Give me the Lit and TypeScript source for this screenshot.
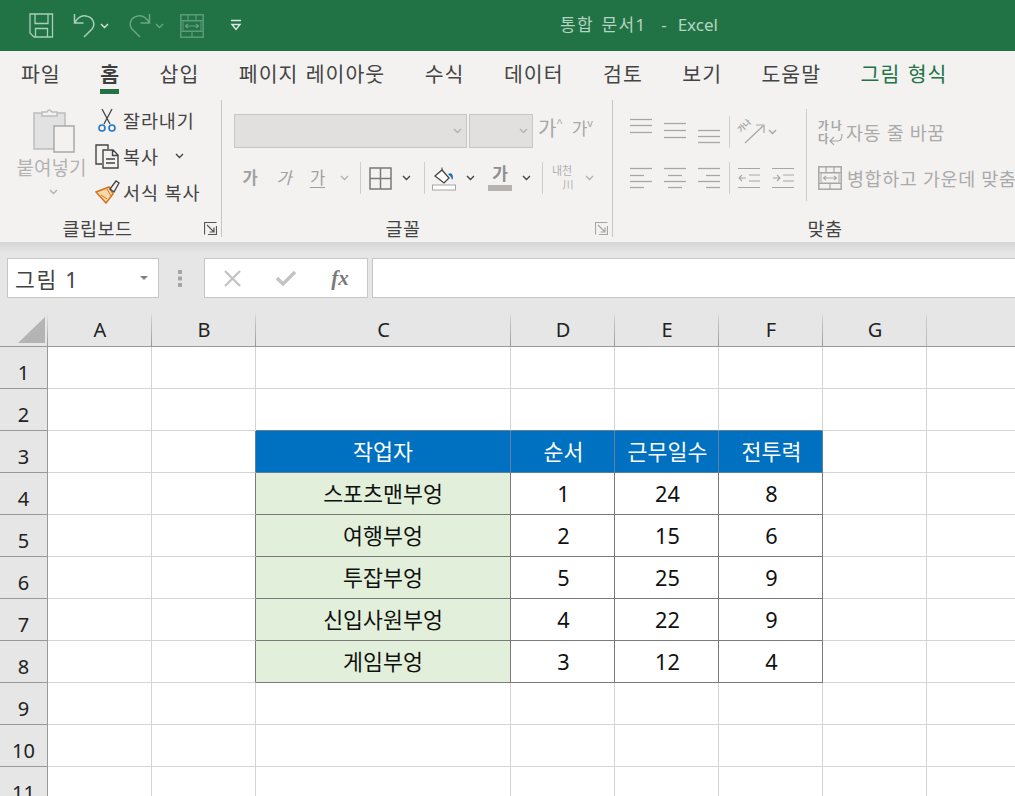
import { LitElement, html, svg, css } from "lit";
import { customElement } from "lit/decorators.js";

const chev = (c = "#444") => html`<svg class="ic" width="9" height="6" viewBox="0 0 9 6"><path d="M1 1l3.5 3.5L8 1" fill="none" stroke=${c} stroke-width="1.4"/></svg>`;
const launcher = (c: string) => html`<svg class="ic" width="13" height="13" viewBox="0 0 13 13"><path d="M.5 12.5V.5h12M12.5 4v8.5H4M3 3l7 7M10 5.5V10H5.5" fill="none" stroke=${c} stroke-width="1.2"/></svg>`;
const lines = (ys: number[], xs: number[][]) => html`<svg class="ic" width="24" height="36" viewBox="0 0 24 36">${ys.map((y, i) => svg`<path d="M${xs[i][0]} ${y}.5H${xs[i][1]}" stroke="#a6a6a6" stroke-width="1.3"/>`)}</svg>`;
const F = [1, 23];
const indent = (arrow: string) => html`<svg class="ic" width="24" height="36" viewBox="0 0 24 36"><path d="M1 8.5h22M1 27.5h22M12 15h11M12 21h11" stroke="#a6a6a6" stroke-width="1.2" fill="none"/><path d=${arrow === "l" ? "M9 18H2M5 15l-3 3 3 3" : "M2 18h7M6 15l3 3-3 3"} stroke="#a6a6a6" stroke-width="1.1" fill="none"/></svg>`;
const mergeIcon = (c: string, a: string) => html`<svg class="ic" width="24" height="24" viewBox="0 0 24 24"><rect x=".8" y=".8" width="22.4" height="22.4" fill="none" stroke=${c} stroke-width="1.5"/><path d="M1 6.5h22M1 17.5h22M8 1v5.5M16 1v5.5M12 17.5V23" stroke=${c} stroke-width="1.2"/><rect x="3" y="7" width="18" height="10" fill="none" stroke=${c}/><path d="M5.5 12h13M8 9.8L5.5 12 8 14.2M16 9.8l2.5 2.2-2.5 2.2" fill="none" stroke=${a} stroke-width="1.1"/></svg>`;

const COLS = ["A", "B", "C", "D", "E", "F", "G", ""];
const TABLE: string[][] = [
  ["작업자", "순서", "근무일수", "전투력"],
  ["스포츠맨부엉", "1", "24", "8"],
  ["여행부엉", "2", "15", "6"],
  ["투잡부엉", "5", "25", "9"],
  ["신입사원부엉", "4", "22", "9"],
  ["게임부엉", "3", "12", "4"],
];
const TABS = ["파일", "홈", "삽입", "페이지 레이아웃", "수식", "데이터", "검토", "보기", "도움말", "그림 형식"];

@customElement("app-root")
export class AppRoot extends LitElement {
  static styles = css`
    :host { display: block; width: 1015px; height: 796px; overflow: hidden; background: #fff;
      font-family: "Noto Sans", "Noto Sans CJK KR", sans-serif; color: #444; }
    .ic { display: block; flex: none; }
    .title { height: 51px; background: #217346; display: flex; align-items: center; position: relative; }
    .qat { display: flex; align-items: center; padding-left: 29px; }
    .qat .q1 { margin-left: 19px; } .qat .q2 { margin-left: 4px; } .qat .q3 { margin-left: 19px; }
    .qat .q4 { margin-left: 4px; } .qat .q5 { margin-left: 16px; } .qat .q6 { margin-left: 26px; }
    .doc { position: absolute; left: 560px; top: 13px; font-size: 17px; line-height: 24px; color: #b5d4c1; white-space: pre; }
    .doc span { letter-spacing: 1.3px; word-spacing: 2px; }
    .doc em { font-style: normal; margin-left: 4px; word-spacing: 1px; }
    .tabs { height: 44px; background: #f3f2f1; display: flex; padding-left: 21px; gap: 39.5px; box-sizing: border-box; }
    .tab { font-size: 20.5px; height: 44px; line-height: 46px; letter-spacing: 1px; word-spacing: 1px; white-space: nowrap; position: relative; color: #444; }
    .tab.on { font-weight: 700; color: #3f3f3f; }
    .tab.on::after { content: ""; position: absolute; left: 0; right: 1px; bottom: 1px; height: 5px; background: #217346; }
    .tab.pic { color: #217346; }
    .ribbon { height: 147px; background: #f3f2f1; display: flex; overflow: hidden; }
    .group { margin: 5px 0; height: 137px; display: grid; grid-template-rows: 116px 21px; border-right: 1px solid #c8c6c4; flex: none; box-sizing: border-box; }
    .g1 { width: 222px; } .g2 { width: 391px; } .g3 { flex: 1; border-right: 0; min-width: 0; }
    .glabel { font-size: 18.5px; line-height: 21px; letter-spacing: .5px; color: #444; display: grid; grid-template-columns: 1fr auto 1fr; align-items: center; transform: translateY(2px); }
    .glabel span { grid-column: 2; }
    .glabel .ic { grid-column: 3; justify-self: end; margin-right: 4px; }
    .g1 .glabel span { margin-right: 26px; } .g2 .glabel span { margin-right: 28px; }
    .g3 .glabel span { margin-left: 22px; }
    .clip { display: flex; padding: 2px 0 0 15px; }
    .paste { width: 73px; display: flex; flex-direction: column; align-items: center; }
    .paste .ic:first-child { margin: 5px 0 0 4px; }
    .paste .t { font-size: 19px; line-height: 24px; color: #b2b2b2; margin-top: 3px; white-space: nowrap; }
    .paste .pch { margin-top: 4px; }
    .cmds { margin-left: 7px; }
    .cmd { height: 36px; display: flex; align-items: center; font-size: 18.5px; letter-spacing: .9px; white-space: nowrap; }
    .cmd .slot { width: 28px; display: flex; }
    .cmd .cut { margin-left: 2px; }
    .cmd .chv { margin-left: 16px; }
    .font { padding: 14px 0 0 12px; }
    .fr1 { display: flex; height: 34px; }
    .sel { height: 34px; background: #e1e0df; border: 1px solid #c8c6c4; box-sizing: border-box; display: flex; align-items: center; justify-content: flex-end; padding-right: 4px; }
    .s1 { width: 233px; } .s2 { width: 64px; margin-left: 2px; }
    .grow { color: #a6a6a6; display: flex; margin-left: 5px; font-size: 20px; line-height: 30px; }
    .grow span.up { font-size: 11px; line-height: 18px; }
    .grow.sm { font-size: 17px; margin-left: 9px; }
    .fr2 { display: grid; grid-template-columns: 34px 34px 33px 20px 12px 28px 24px 12px 28px 24px 36px 16px 16px 24px 30px; height: 36px; margin: 12px 0 0 -1px; align-items: center; justify-items: center; }
    .sep { width: 1px; height: 32px; background: #d0cecc; }
    .fmt { font-size: 16.5px; color: #a0a0a0; line-height: 36px; }
    .fmt.b { font-weight: 700; } .fmt.i { font-style: italic; }
    .fmt.u { text-decoration: underline; text-underline-offset: 3px; }
    .fc { font-size: 17px; font-weight: 700; color: #8f8f8f; line-height: 18px; display: flex; flex-direction: column; align-items: center; }
    .fc i { display: block; width: 24px; height: 6px; background: #b5b2af; margin-top: 2px; }
    .ph { font-size: 11px; line-height: 14px; color: #b0b0b0; text-align: center; white-space: nowrap; }
    .ph b { display: block; font-weight: 400; padding-left: 12px; }
    .align { display: grid; padding: 14px 0 0 11px; grid-template-columns: 34px 34px 34px 6px 34px 34px 12px 1fr; grid-template-rows: 36px 36px; row-gap: 10px; justify-items: center; align-items: center; overflow: hidden; }
    .orient { grid-column: span 2; display: flex; align-items: center; justify-self: start; padding-left: 5px; gap: 3px; }
    .orient svg { overflow: visible; }
    .orient text { font-size: 8px; fill: #a6a6a6; stroke: none; font-weight: 700; }
    .bsep { grid-row: 1 / span 2; grid-column: 7; width: 1px; height: 92px; background: #d0cecc; }
    .wrap { justify-self: stretch; display: flex; align-items: center; font-size: 18.5px; color: #aaa; white-space: nowrap; letter-spacing: .6px; gap: 3px; padding-left: 6px; min-width: 0; }
    .wrap.m { gap: 5px; grid-column: 8; }
    .wrap.w { grid-column: 8; grid-row: 1; }
    .wicon { width: 25px; height: 26px; flex: none; display: grid; grid-template-columns: 13px 12px; grid-template-rows: 13px 13px; font-size: 11.5px; line-height: 13px; letter-spacing: 0; font-weight: 700; color: #a6a6a6; }
    .wicon svg { grid-column: 1 / span 2; grid-row: 2; justify-self: end; }
    .wicon .k3 { grid-column: 1; grid-row: 2; }
    .fbar { background: #e6e6e6; }
    .shadow { height: 16px; background: linear-gradient(#d6d6d6, #e6e6e6 70%); }
    .frow { display: flex; height: 40px; padding-left: 7px; }
    .box { background: #fff; border: 1px solid #c8c6c4; box-sizing: border-box; height: 40px; }
    .name { width: 152px; display: flex; align-items: center; justify-content: space-between; padding: 0 10px 0 7px; font-size: 21.5px; letter-spacing: 1.7px; color: #444; }
    .name i { width: 0; height: 0; border: 4px solid transparent; border-top: 4px solid #808080; border-bottom: 0; }
    .dots { width: 45px; display: flex; align-items: center; padding-left: 19px; box-sizing: border-box; }
    .fxb { width: 164px; display: grid; grid-template-columns: 54px 54px 54px; justify-items: center; align-items: center; }
    .fx { font-family: "Liberation Serif", serif; font-style: italic; font-weight: 700; font-size: 21px; color: #7a7a7a; line-height: 36px; }
    .input { flex: 1; margin-left: 4px; border-right: 0; }
    .sheet { display: grid; grid-template-columns: 48px 104px 104px 255px 104px 104px 104px 104px 1fr; grid-template-rows: 49px; grid-auto-rows: 42px; }
    .corner, .chd, .rh { background: #e6e6e6; box-sizing: border-box; color: #222; }
    .corner { height: 49px; display: flex; align-items: flex-end; justify-content: flex-end; padding: 0 3px 3px 0; border-bottom: 1px solid #999; background-image: linear-gradient(#e6e6e6 15px, #999); background-size: 1px 100%; background-repeat: no-repeat; background-position: right; }
    .chd { height: 49px; font-size: 20px; line-height: 22px; padding-top: 21px; text-align: center; border-bottom: 1px solid #999; background-image: linear-gradient(#e6e6e6 15px, #ccc 20px, #999); background-size: 1px 100%; background-repeat: no-repeat; background-position: right; }
    .chd.last { background-image: none; }
    .chd.g { background-image: linear-gradient(#e6e6e6 15px, #ccc 20px, #bbb); }
    .rh { height: 42px; border-right: 1px solid #999; border-bottom: 1px solid #999; text-align: center; font-size: 20px; line-height: 24px; padding-top: 14px; }
    .c { box-sizing: border-box; height: 42px; border-right: 1px solid #d4d4d4; border-bottom: 1px solid #d4d4d4; font-size: 21.7px; line-height: 42px; text-align: center; color: #111; white-space: nowrap; }
    .c.last { border-right: 0; }
    .c.num { padding-left: 2px; }
    .c.br { border-right-color: #7a7a7a; } .c.bb { border-bottom-color: #7a7a7a; }
    .c.hb { border-bottom-color: #5f7f9f; } .c.hr { border-right-color: #5f7f9f; }
    .c.head { background: #0070c0; color: #fff; }
    .c.label { background: #e2efda; }
  `;

  cell(col: number, row: number) {
    const inCols = col >= 2 && col <= 5;
    const inRows = row >= 3 && row <= 8;
    const text = inCols && inRows ? TABLE[row - 3][col - 2] : "";
    const cls = ["c"];
    if (col === 7) cls.push("last");
    if (inRows && inCols) cls.push("br", "bb");
    if (inRows && col >= 3 && col <= 5) cls.push("num");
    if (inRows && col === 1) cls.push("br");
    if (row === 2 && inCols) cls.push("hb");
    if (row === 3 && inCols) cls.push("hr", "hb");
    if (row === 3 && col === 1) cls.push("hr");
    if (row === 3 && inCols) cls.push("head");
    else if (inRows && col === 2) cls.push("label");
    return html`<div class=${cls.join(" ")}>${text}</div>`;
  }

  render() {
    const G = "#a8d0b8";
    const D = "#6aa585";
    return html`
      <div class="title">
        <div class="qat">
          <svg class="ic" width="25" height="25" viewBox="0 0 25 25" fill="none" stroke=${G} stroke-width="1.3"><path d="M1 1h22.5v23H5l-4-4zM6 1v9.5h13V1M6.5 24v-8.5h12V24"/></svg>
          <svg class="ic q1" width="23" height="25" viewBox="0 0 23 25" fill="none" stroke=${G} stroke-width="1.5"><path d="M1.5 1v9h9M1.5 10C5 4 9 2 13 3c7 1 10 8 6 13l-8 8"/></svg>
          <span class="q2">${chev("#d8e8de")}</span>
          <svg class="ic q3" width="23" height="25" viewBox="0 0 23 25" fill="none" stroke=${D} stroke-width="1.5"><path d="M21.5 1v9h-9M21.5 10C18 4 14 2 10 3 3 4 0 11 4 16l8 8"/></svg>
          <span class="q4">${chev("#6aa585")}</span>
          <span class="q5">${mergeIcon("#5c9c7a", "#6aa585")}</span>
          <svg class="ic q6" width="12" height="13" viewBox="0 0 12 13" fill="none" stroke="#d8e8de" stroke-width="1.4"><path d="M1 1.5h10M2 5.5l4 5 4-5z"/></svg>
        </div>
        <div class="doc"><span>통합 문서1</span><em>  -  Excel</em></div>
      </div>
      <div class="tabs">
        ${TABS.map((t, i) => html`<div class="tab ${i === 1 ? "on" : ""} ${i === 9 ? "pic" : ""}">${t}</div>`)}
      </div>
      <div class="ribbon">
        <div class="group g1">
          <div class="clip">
            <div class="paste">
              <svg class="ic" width="42" height="46" viewBox="0 0 42 46"><path d="M1 6h31v36H1z" fill="#e2e2e2" stroke="#bdbdbd" stroke-width="1.5"/><path d="M9 9V5h5q2-4 5 0h5v4z" fill="#f3f2f1" stroke="#bdbdbd" stroke-width="1.5"/><path d="M21 19h20v26H21z" fill="#f3f2f1" stroke="#a9a9a9" stroke-width="1.5"/></svg>
              <div class="t">붙여넣기</div>
              <span class="pch">${chev("#b2b2b2")}</span>
            </div>
            <div class="cmds">
              <div class="cmd"><span class="slot"><svg class="ic cut" width="20" height="25" viewBox="0 0 20 25" fill="none"><path d="M5 1l8 15M15 1L7 16" stroke="#444" stroke-width="1.3"/><circle cx="5" cy="20" r="3" stroke="#1e78c8" stroke-width="1.6"/><circle cx="15" cy="20" r="3" stroke="#1e78c8" stroke-width="1.6"/></svg></span>잘라내기</div>
              <div class="cmd"><span class="slot"><svg class="ic" width="25" height="25" viewBox="0 0 25 25" fill="none" stroke="#444" stroke-width="1.4"><path d="M7 20H1V1h12v4"/><path d="M8 6h10l5 5v13H8zM17.5 6v5.5H23M11 15h9M11 19h9"/></svg></span>복사<span class="chv">${chev()}</span></div>
              <div class="cmd"><span class="slot"><svg class="ic" width="25" height="24" viewBox="0 0 25 24" fill="none"><path d="M1 12L14 7l4 7-7 9z" fill="#f6d9a8" stroke="#d9701e" stroke-width="1.5"/><path d="M6 15l6 4M12 9l4 7" stroke="#d9701e"/><path d="M15 9l6-8 3 2-5 9z" fill="#f3f2f1" stroke="#444" stroke-width="1.3"/></svg></span>서식 복사</div>
            </div>
          </div>
          <div class="glabel"><span>클립보드</span>${launcher("#555")}</div>
        </div>
        <div class="group g2">
          <div class="font">
            <div class="fr1">
              <div class="sel s1">${chev("#b2b2b2")}</div>
              <div class="sel s2">${chev("#b2b2b2")}</div>
              <div class="grow">가<span class="up">^</span></div>
              <div class="grow sm">가<span class="up">v</span></div>
            </div>
            <div class="fr2">
              <div class="fmt b">가</div><div class="fmt i">가</div><div class="fmt u">가</div>${chev("#b2b2b2")}
              <div class="sep"></div>
              <svg class="ic" width="23" height="23" viewBox="0 0 23 23" fill="none" stroke="#7a7a7a" stroke-width="1.5"><path d="M1 1h21v21H1zM11.5 1v21M1 11.5h21"/></svg>
              ${chev()}
              <div class="sep"></div>
              <svg class="ic" width="24" height="25" viewBox="0 0 24 25" fill="none"><path d="M3 10l7-6 7 8-5 5z" fill="#fff" stroke="#444" stroke-width="1.3"/><path d="M10 4V1.5" stroke="#444"/><path d="M16 8c3-2 5 0 5 4l-1 2-1-3z" fill="#1d6fb8"/><rect x=".5" y="19" width="23" height="5" fill="#fff" stroke="#a6a6a6"/></svg>
              ${chev()}
              <div class="fc">가<i></i></div>
              ${chev()}
              <div class="sep"></div>
              <div class="ph">내천<b>川</b></div>
              ${chev("#b2b2b2")}
            </div>
          </div>
          <div class="glabel"><span>글꼴</span>${launcher("#a6a6a6")}</div>
        </div>
        <div class="group g3">
          <div class="align">
            ${lines([5, 11, 18], [F, F, F])}${lines([9, 16, 23], [F, F, F])}${lines([16, 22, 28], [F, F, F])}
            <div class="sep"></div>
            <div class="orient">
              <svg class="ic" width="28" height="24" viewBox="0 0 28 24" fill="none" stroke="#a6a6a6" stroke-width="1.2"><path d="M8 23L26 6M19 5h8v8"/><text transform="translate(4 13) rotate(-45)">가나</text></svg>
              ${chev("#a6a6a6")}
            </div>
            <div class="bsep"></div>
            <div class="wrap w"><div class="wicon"><span>가</span><span>나</span><span class="k3">다</span><svg class="ic" width="14" height="13" viewBox="0 0 14 13" fill="none" stroke="#a6a6a6" stroke-width="1.2"><path d="M1 9h8q4 0 4-7M5 5L1 9l4 4"/></svg></div>자동 줄 바꿈</div>
            ${lines([8, 15, 21, 27], [F, [1, 15], F, [1, 15]])}${lines([8, 15, 21, 27], [F, [5, 19], F, [5, 19]])}${lines([8, 15, 21, 27], [F, [9, 23], F, [9, 23]])}
            <div class="sep"></div>
            ${indent("l")}${indent("r")}
            <div class="wrap m">${mergeIcon("#a6a6a6", "#a6a6a6")}병합하고 가운데 맞춤</div>
          </div>
          <div class="glabel"><span>맞춤</span></div>
        </div>
      </div>
      <div class="fbar">
        <div class="shadow"></div>
        <div class="frow">
          <div class="box name">그림 1<i></i></div>
          <div class="dots"><svg class="ic" width="4" height="17" viewBox="0 0 4 17" fill="#a6a6a6"><rect width="4" height="4" y="0"/><rect width="4" height="4" y="6.5"/><rect width="4" height="4" y="13"/></svg></div>
          <div class="box fxb">
            <svg class="ic" width="17" height="17" viewBox="0 0 17 17" stroke="#c4c4c4" stroke-width="2.4"><path d="M1 1l15 15M16 1L1 16"/></svg>
            <svg class="ic" width="20" height="16" viewBox="0 0 20 16" fill="none" stroke="#c4c4c4" stroke-width="3.4"><path d="M1 8l6 6L19 2"/></svg>
            <span class="fx">fx</span>
          </div>
          <div class="box input"></div>
        </div>
      </div>
      <div class="sheet">
        <div class="corner"><svg class="ic" width="27" height="26" viewBox="0 0 27 26"><path d="M27 0v26H0z" fill="#b4b4b4"/></svg></div>
        ${COLS.map((c, i) => html`<div class="chd ${i === 7 ? "last" : ""} ${i === 6 ? "g" : ""}">${c}</div>`)}
        ${[1, 2, 3, 4, 5, 6, 7, 8, 9, 10, 11].map((r) => html`
          <div class="rh">${r}</div>
          ${COLS.map((_, i) => this.cell(i, r))}
        `)}
      </div>
    `;
  }
}
